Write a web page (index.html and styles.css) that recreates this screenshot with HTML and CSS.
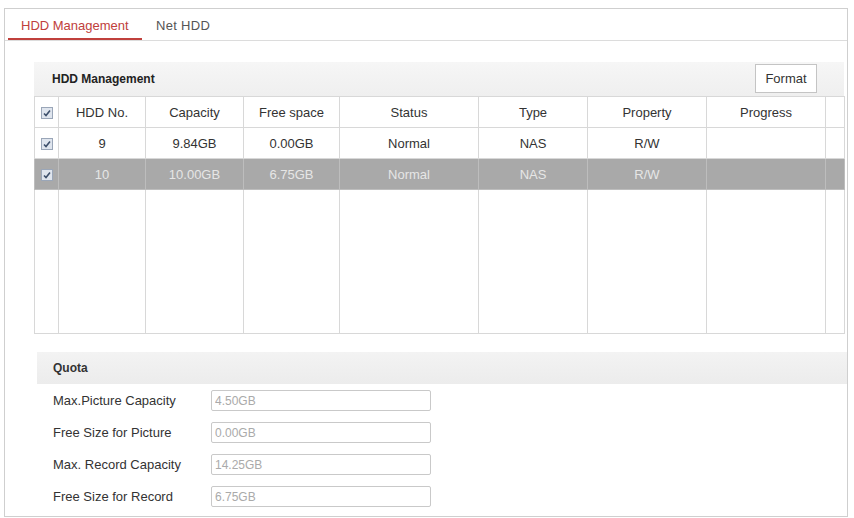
FILE: index.html
```html
<!DOCTYPE html>
<html lang="en">
<head>
  <meta charset="UTF-8">
  <title>Storage - HDD Management</title>
  <link rel="stylesheet" href="styles.css">
</head>
<body>

  <div class="marco">
    <div class="pestanas">
      <span class="pestana activa">HDD Management</span>
      <span class="pestana">Net HDD</span>
    </div>

    <div class="panel">
      <div class="panel-titulo">
        <span>HDD Management</span>
        <button class="boton">Format</button>
      </div>

      <table class="tabla">
        <colgroup>
          <col style="width: 24px">
          <col style="width: 87px">
          <col style="width: 98px">
          <col style="width: 96px">
          <col style="width: 139px">
          <col style="width: 109px">
          <col style="width: 119px">
          <col style="width: 119px">
          <col style="width: 19px">
        </colgroup>
        <tr>
          <td><span class="check"></span></td>
          <td>HDD No.</td>
          <td>Capacity</td>
          <td>Free space</td>
          <td>Status</td>
          <td>Type</td>
          <td>Property</td>
          <td>Progress</td>
          <td></td>
        </tr>
        <tr>
          <td><span class="check"></span></td>
          <td>9</td>
          <td>9.84GB</td>
          <td>0.00GB</td>
          <td>Normal</td>
          <td>NAS</td>
          <td>R/W</td>
          <td></td>
          <td></td>
        </tr>
        <tr class="seleccionada">
          <td><span class="check"></span></td>
          <td>10</td>
          <td>10.00GB</td>
          <td>6.75GB</td>
          <td>Normal</td>
          <td>NAS</td>
          <td>R/W</td>
          <td></td>
          <td></td>
        </tr>
        <tr class="relleno">
          <td></td><td></td><td></td><td></td><td></td><td></td><td></td><td></td><td></td>
        </tr>
      </table>
    </div>

    <div class="cuota">
      <div class="cuota-titulo">Quota</div>
      <div class="fila">
        <label>Max.Picture Capacity</label>
        <input class="campo" type="text" value="4.50GB" disabled>
      </div>
      <div class="fila">
        <label>Free Size for Picture</label>
        <input class="campo" type="text" value="0.00GB" disabled>
      </div>
      <div class="fila">
        <label>Max. Record Capacity</label>
        <input class="campo" type="text" value="14.25GB" disabled>
      </div>
      <div class="fila">
        <label>Free Size for Record</label>
        <input class="campo" type="text" value="6.75GB" disabled>
      </div>
    </div>
  </div>

</body>
</html>
```

FILE: styles.css
```css
  body {
    margin: 0;
    padding: 8px 6px 0 4px;
    font-family: "Liberation Sans", Arial, sans-serif;
    background-color: #fff;
    color: #333;
  }

  .marco {
    border: 1px solid #cfcfcf;
    height: 507px;
    box-sizing: content-box;
  }

  .pestanas {
    display: flex;
    height: 31px;
    border-bottom: 1px solid #dcdcdc;
    padding-left: 3px;
    font-size: 13px;
  }

  .pestana {
    padding: 4px 13px 0;
    line-height: 26px;
    color: #555;
    letter-spacing: 0.3px;
  }

  .pestana.activa {
    width: 108px;
    color: #c0403c;
    border-bottom: 2px solid #c0403c;
    line-height: 25px;
    margin-right: 1px;
    letter-spacing: 0;
  }

  .panel {
    margin: 21px 3px 0 29px;
  }

  .panel-titulo {
    display: flex;
    align-items: center;
    justify-content: space-between;
    height: 34px;
    padding: 0 27px 0 18px;
    background: linear-gradient(#f6f6f6, #efefef);
    font-size: 12px;
    font-weight: bold;
    color: #222;
  }

  .boton {
    width: 62px;
    height: 29px;
    margin-top: -2px;
    background-color: #fff;
    border: 1px solid #c4c4c4;
    font-family: "Liberation Sans", Arial, sans-serif;
    font-size: 13px;
    color: #333;
    padding: 0;
  }

  .tabla {
    width: 810px;
    table-layout: fixed;
    border-collapse: collapse;
    font-size: 13px;
  }

  .tabla td {
    height: 30px;
    padding: 0;
    border: 1px solid #d8d8d8;
    text-align: center;
  }

  .tabla tr.seleccionada td {
    background-color: #a9a9a9;
    color: #e6e6e6;
    border-color: #bdbdbd;
  }

  .tabla tr.relleno td {
    height: 143px;
  }

  .check {
    display: inline-block;
    width: 10px;
    height: 10px;
    border: 1px solid #9aa6b8;
    background: #dfe5ee url("data:image/svg+xml,%3Csvg xmlns='http://www.w3.org/2000/svg' width='10' height='10'%3E%3Cpath d='M2 5.5 L4 7.5 L8 2.5' fill='none' stroke='%233d4f6b' stroke-width='1.6'/%3E%3C/svg%3E") no-repeat center;
    vertical-align: middle;
  }

  .cuota {
    margin: 18px 0 0 32px;
  }

  .cuota-titulo {
    height: 32px;
    line-height: 32px;
    padding-left: 16px;
    background: linear-gradient(#f3f3f3, #ececec);
    font-size: 12px;
    font-weight: bold;
    color: #333;
    margin-bottom: 6px;
  }

  .fila {
    display: flex;
    align-items: center;
    height: 21px;
    margin-bottom: 11px;
    padding-left: 16px;
    font-size: 13px;
  }

  .fila label {
    width: 158px;
    color: #333;
  }

  .campo {
    width: 220px;
    height: 21px;
    box-sizing: border-box;
    border: 1px solid #c9c9c9;
    border-radius: 2px;
    background-color: #fff;
    padding: 0 3px;
    font-family: "Liberation Sans", Arial, sans-serif;
    font-size: 12px;
    color: #aaa;
  }
```
